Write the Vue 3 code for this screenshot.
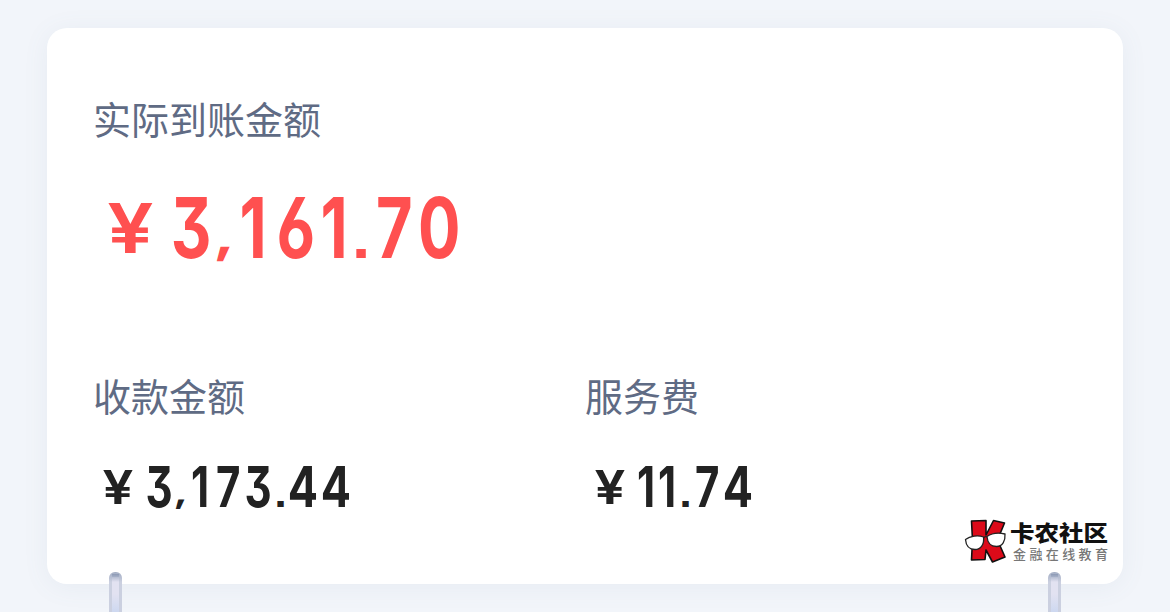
<template>
  <div class="page">
    <section class="card">
      <div class="summary">
        <div class="label">实际到账金额</div>
        <div class="amount amount-lg">
          <span class="yen"><span class="yen-sign">¥</span></span>
          <span
            v-for="(cell, i) in received"
            :key="i"
            class="cell"
            :style="{ width: cell.w + 'px' }"
          ><span :class="glyphClass(cell.ch)">{{ cell.ch }}</span></span>
        </div>
      </div>

      <div class="details">
        <div v-for="item in details" :key="item.label" class="detail">
          <div class="label">{{ item.label }}</div>
          <div class="amount amount-sm">
            <span class="yen"><span class="yen-sign">¥</span></span>
            <span
              v-for="(cell, i) in item.cells"
              :key="i"
              class="cell"
              :style="{ width: cell.w + 'px' }"
            ><span :class="glyphClass(cell.ch)">{{ cell.ch }}</span></span>
          </div>
        </div>
      </div>
    </section>

    <div class="pin pin-left"></div>
    <div class="pin pin-right"></div>

    <div class="brand">
      <svg class="brand-logo" viewBox="0 0 44 46" width="44" height="46">
        <g stroke="#111" stroke-width="1.6" stroke-linejoin="round" fill="#dc0a19">
          <path d="M7.500 3 L22 2.500 L22 17 L29.500 2.500 L40.500 5 L33.500 22 L41 39 L28.500 44 L22 32 L21 41.500 L7.500 42 L8.500 22 Z" />
        </g>
        <g stroke="#222" stroke-width="1.3" fill="#fff">
          <path d="M1.500 21.500 C6 18 14 17 19.500 19 C20.500 26 17 31.500 11 31.500 C5 31.500 2 28 1.500 21.500 Z" />
          <path d="M23 18.500 C28 15 35 14.500 41 16 C41.500 23 38.500 28.500 32.500 28.500 C27 28.500 23.500 25 23 18.500 Z" />
          <path d="M19.500 20 Q21 18 23 19" fill="none" />
        </g>
      </svg>
      <div class="brand-text">
        <div class="brand-name">卡农社区</div>
        <div class="brand-sub">金融在线教育</div>
      </div>
    </div>
  </div>
</template>

<script setup>
const toCells = (text, widths) => [...text].map((ch, i) => ({ ch, w: widths[i] }));

const received = toCells('3,161.70', [43, 20, 41, 44, 33, 20, 46, 44]);

const details = [
  { label: '收款金额', cells: toCells('3,173.44', [30, 13, 27, 28, 33, 11, 33, 34]) },
  { label: '服务费', cells: toCells('11.74', [20, 22, 15, 28, 34]) },
];

const glyphClass = (ch) => ['glyph', { comma: ch === ',', dot: ch === '.', four: ch === '4' }];
</script>

<style>
body {
  margin: 0;
}
</style>

<style scoped>
.page {
  position: relative;
  box-sizing: border-box;
  width: 1170px;
  height: 612px;
  padding: 28px 47px;
  overflow: hidden;
  background: #f2f5fa;
  font-family: 'Inter', 'Noto Sans CJK SC', sans-serif;
}

.card {
  box-sizing: border-box;
  height: 556px;
  padding: 62px 46px 0;
  border-radius: 20px;
  background: #fff;
  box-shadow: 0 3px 26px rgba(100, 125, 150, 0.08);
}

.label {
  height: 56px;
  font-family: 'Noto Sans CJK SC', sans-serif;
  font-size: 38px;
  line-height: 56px;
  color: #5f6b84;
  white-space: nowrap;
}

.summary {
  height: 277px;
}

.details {
  display: flex;
}

.detail {
  width: 492px;
}

.amount {
  display: flex;
  align-items: baseline;
  font-weight: 750;
  font-feature-settings: 'cv09', 'cv03', 'ss07';
  white-space: nowrap;
}

.amount-lg {
  margin-top: 31px;
  height: 102px;
  padding-left: 1px;
  font-size: 84px;
  line-height: 102px;
  color: #ff5050;
}

.amount-sm {
  margin-top: 30px;
  height: 68px;
  padding-left: 1px;
  font-size: 56px;
  line-height: 68px;
  color: #222;
}

.yen {
  display: flex;
  flex: none;
  justify-content: center;
  font-weight: 600;
}

.yen-sign {
  transform: scaleX(1.19);
}

.amount-lg .yen {
  width: 74px;
  margin-right: 2px;
  font-size: 69px;
  transform: translate(-1px, -5px);
}

.amount-sm .yen {
  width: 48px;
  margin-right: 2px;
  font-size: 46px;
  transform: translateY(-3px);
}

.cell {
  display: flex;
  flex: none;
  justify-content: center;
}

.glyph {
  flex: none;
  transform: scaleX(0.75);
}

.glyph.four {
  transform: scaleX(0.8);
}

.glyph.comma {
  font-size: 0.58em;
  font-weight: 900;
  font-feature-settings: 'ss07' 0;
  transform: translate(0.06em, -0.08em) scaleY(0.9) skewX(-6deg);
}

.glyph.dot {
  font-size: 0.7em;
  transform: none;
}

.pin {
  position: absolute;
  top: 572px;
  width: 13px;
  height: 50px;
  border-radius: 6px 6px 0 0;
  background:
    linear-gradient(#8c9ab4, #a6b0c8) 3px 2px / 7px 3px no-repeat,
    linear-gradient(#a2adc3 0, #b5bdd1 5px, transparent 10px),
    linear-gradient(90deg, #cbd0e0 3px, transparent 3px 10px, #cbd0e0 10px),
    linear-gradient(#e2e2f1 22px, #cbd7f0 42px);
}

.pin-left {
  left: 109px;
}

.pin-right {
  left: 1048px;
}

.brand {
  position: absolute;
  left: 964px;
  top: 518px;
  display: flex;
}

.brand-logo {
  flex: none;
}

.brand-text {
  padding: 1px 0 0 2px;
  font-family: 'Noto Sans CJK SC', sans-serif;
  white-space: nowrap;
}

.brand-name {
  height: 27px;
  font-size: 24.5px;
  font-weight: 900;
  line-height: 27px;
  color: #111;
  transform: translateY(-1px) scaleY(0.88);
}

.brand-sub {
  padding-left: 3px;
  font-size: 13px;
  font-weight: 500;
  letter-spacing: 3.4px;
  line-height: 16px;
  color: #777;
}
</style>
